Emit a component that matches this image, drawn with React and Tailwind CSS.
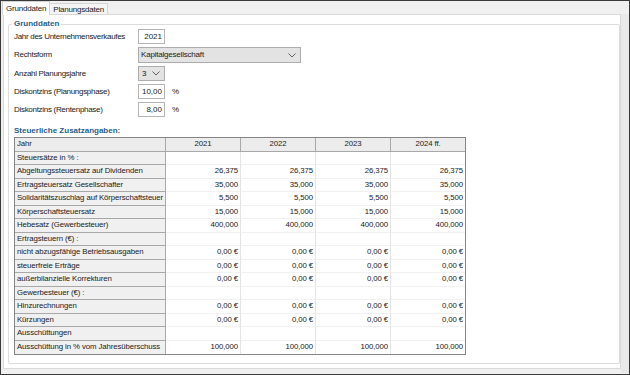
import React from "react";

const rows = [
  ["Steuersätze in % :", null],
  ["Abgeltungssteuersatz auf Dividenden", "26,375"],
  ["Ertragsteuersatz Gesellschafter", "35,000"],
  ["Solidaritätszuschlag auf Körperschaftsteuer", "5,500"],
  ["Körperschaftsteuersatz", "15,000"],
  ["Hebesatz (Gewerbesteuer)", "400,000"],
  ["Ertragsteuern (€) :", null],
  ["nicht abzugsfähige Betriebsausgaben", "0,00 €"],
  ["steuerfreie Erträge", "0,00 €"],
  ["außerbilanzielle Korrekturen", "0,00 €"],
  ["Gewerbesteuer (€) :", null],
  ["Hinzurechnungen", "0,00 €"],
  ["Kürzungen", "0,00 €"],
  ["Ausschüttungen", null],
  ["Ausschüttung in % vom Jahresüberschuss", "100,000"],
];

const years = ["2021", "2022", "2023", "2024 ff."];

function Chevron() {
  return (
    <svg width="8" height="5" viewBox="0 0 8 5" className="shrink-0">
      <polyline points="0.5,0.5 4,4 7.5,0.5" fill="none" stroke="#606060" strokeWidth="1" />
    </svg>
  );
}

function FormRow({ label, children, tall }) {
  return (
    <div className={`flex items-center ${tall ? "h-[16px]" : "h-[15px]"}`}>
      <div className="w-[124px] shrink-0 tracking-[-0.3px]">{label}</div>
      {children}
    </div>
  );
}

function NumberBox({ value, unit }) {
  return (
    <>
      <div className="w-[27px] h-[15px] border border-[#b4b4b4] bg-white flex items-center justify-end pr-[2px]">
        {value}
      </div>
      {unit && <span className="ml-[7px]">{unit}</span>}
    </>
  );
}

export default function App() {
  return (
    <div
      className="w-[630px] h-[375px] bg-[#f0f0f0] border border-[#3a3a3a] flex flex-col text-[8px] leading-[10px] text-[#1a1a1a] overflow-hidden"
      style={{ fontFamily: '"Liberation Sans", Arial, sans-serif' }}
    >
      {/* ===== TABS ===== */}
      <div className="flex items-end h-[13px] pl-[1px] tracking-[-0.2px]">
        <div className="relative z-10 -mb-px h-[14px] px-[3px] pt-[2px] bg-white border border-b-0 border-[#d4d4d4]">
          Grunddaten
        </div>
        <div className="h-[11px] px-[3px] pt-[1px] bg-[#f4f4f4] border border-b-0 border-l-0 border-[#d4d4d4]">
          Planungsdaten
        </div>
      </div>

      {/* ===== PANEL ===== */}
      <div className="flex flex-1 min-h-0">
        <div className="flex-1 ml-[2px] mb-[5px] bg-white border border-[#d9d9d9] pt-[4px] pb-[4px] pl-[4px] flex">
          <fieldset className="flex-1 border border-[#dcdcdc] rounded-[2px] min-w-0">
            <legend className="ml-[3px] px-[2px] font-bold text-[#1f5f8b]">Grunddaten</legend>

            <div className="pl-[5px]">
              <div className="flex flex-col gap-[3px]">
                <FormRow label="Jahr des Unternehmensverkaufes">
                  <div className="w-[27px] h-[15px] border border-[#b4b4b4] bg-white flex items-center justify-end pr-[2px]">
                    2021
                  </div>
                </FormRow>
                <FormRow label="Rechtsform" tall>
                  <div className="w-[163px] h-[16px] border border-[#adadad] bg-[#e3e3e3] flex items-center justify-between pl-[2px] pr-[4px] tracking-[-0.2px]">
                    <span>Kapitalgesellschaft</span>
                    <Chevron />
                  </div>
                </FormRow>
                <FormRow label="Anzahl Planungsjahre">
                  <div className="w-[27px] h-[15px] border border-[#adadad] bg-[#e3e3e3] flex items-center justify-between pl-[3px] pr-[4px]">
                    <span>3</span>
                    <Chevron />
                  </div>
                </FormRow>
                <FormRow label="Diskontzins (Planungsphase)">
                  <NumberBox value="10,00" unit="%" />
                </FormRow>
                <FormRow label="Diskontzins (Rentenphase)">
                  <NumberBox value="8,00" unit="%" />
                </FormRow>
              </div>

              <div className="mt-[9px] mb-px font-bold text-[#1f5f8b]">Steuerliche Zusatzangaben:</div>

              {/* ===== TABLE ===== */}
              <div className="w-[452px] border border-[#868686] text-[#222] text-[7.8px] tracking-[-0.1px]">
                <div className="grid grid-cols-[151px_75px_75px_75px_74px] h-[13.5px] bg-[#ececec]">
                  <div className="border-r border-b border-[#a8a8a8] pl-[2px] flex items-center">Jahr</div>
                  {years.map((y, i) => (
                    <div
                      key={y}
                      className={`border-b border-[#a8a8a8] flex items-center justify-center ${i < 3 ? "border-r" : ""}`}
                    >
                      {y}
                    </div>
                  ))}
                </div>
                {rows.map(([label, value], r) => (
                  <div key={r} className="grid grid-cols-[151px_75px_75px_75px_74px] h-[13.5px]">
                    <div
                      className={`bg-[#f0f0f0] border-r border-[#a8a8a8] pl-[2px] flex items-center overflow-hidden whitespace-nowrap ${
                        r < rows.length - 1 ? "border-b" : ""
                      }`}
                    >
                      {label}
                    </div>
                    {years.map((y, i) => (
                      <div
                        key={y}
                        className={`bg-white flex items-center justify-end pr-[2px] border-[#e4e4e4] ${
                          i < 3 ? "border-r" : ""
                        } ${r < rows.length - 1 ? "border-b border-b-[#f1f1f1]" : ""}`}
                      >
                        {value}
                      </div>
                    ))}
                  </div>
                ))}
              </div>
            </div>
          </fieldset>
        </div>
        <div className="w-[8px] mb-[1px] bg-[#e9e9e9]" />
      </div>
    </div>
  );
}
